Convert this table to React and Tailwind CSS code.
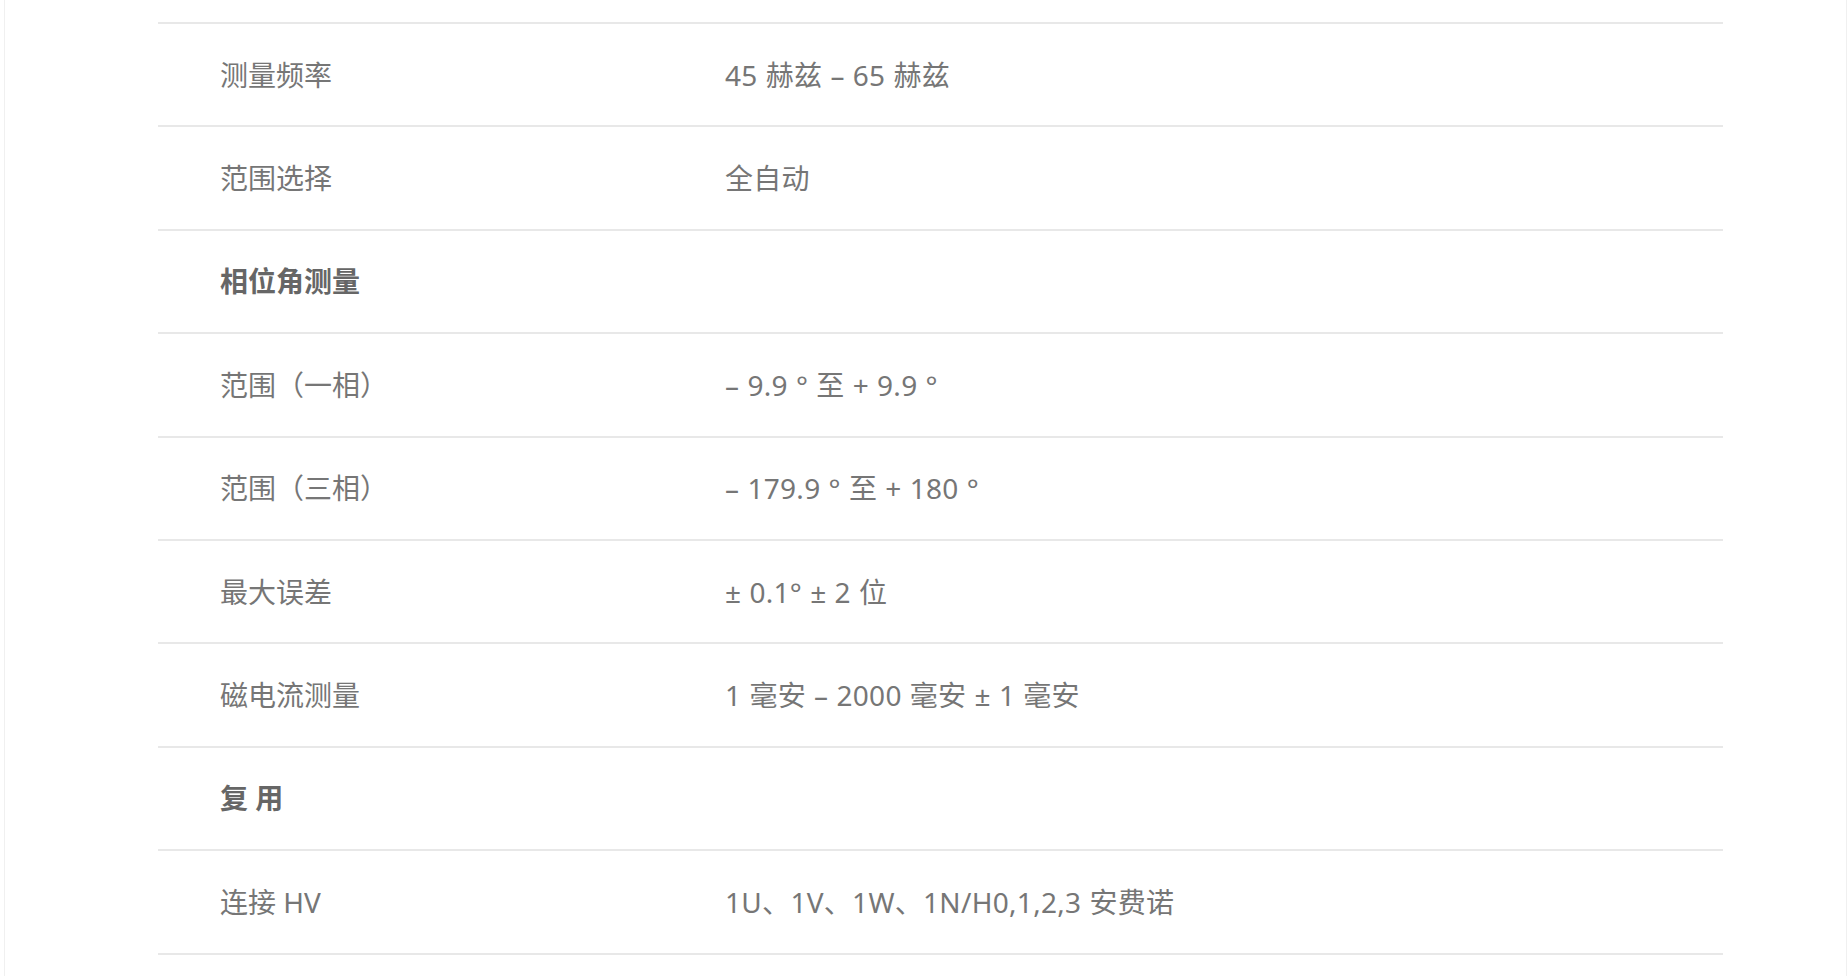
import React from 'react';

// Spec rows: bold rows are section headings with no value
const ROWS = [
  { label: '测量频率', value: '45 赫兹 – 65 赫兹' },
  { label: '范围选择', value: '全自动' },
  { label: '相位角测量', heading: true },
  { label: '范围（一相）', value: '– 9.9 ° 至 + 9.9 °' },
  { label: '范围（三相）', value: '– 179.9 ° 至 + 180 °' },
  { label: '最大误差', value: '± 0.1° ± 2 位' },
  { label: '磁电流测量', value: '1 毫安 – 2000 毫安 ± 1 毫安' },
  { label: '复 用', heading: true },
  { label: '连接 HV', value: '1U、1V、1W、1N/H0,1,2,3 安费诺' },
];

function SpecRow({ label, value, heading }) {
  return (
    <div className="flex h-[103.4px] items-center border-b-2 border-[#e8e8e8]">
      <div
        className={`w-[567px] pl-[62px] ${heading ? 'font-bold text-[#666]' : ''}`}
      >
        {label}
      </div>
      <div className="flex-1 tracking-[0.3px] [word-spacing:0.5px]">{value}</div>
    </div>
  );
}

export default function App() {
  return (
    <div className="h-[976px] w-full overflow-hidden bg-white pl-[4px] pr-[1px]">
      <div
        className="h-full border-l border-r border-[#f0f0f0] text-[28px] leading-none text-[#767676]"
        style={{ fontFamily: '"Noto Sans", "Noto Sans CJK SC", sans-serif' }}
      >
        <div className="ml-[153px] w-[1565px]">
          <div className="h-[24px] border-b-2 border-[#e8e8e8]" />
          {ROWS.map((r, i) => (
            <SpecRow key={i} {...r} />
          ))}
        </div>
      </div>
    </div>
  );
}
